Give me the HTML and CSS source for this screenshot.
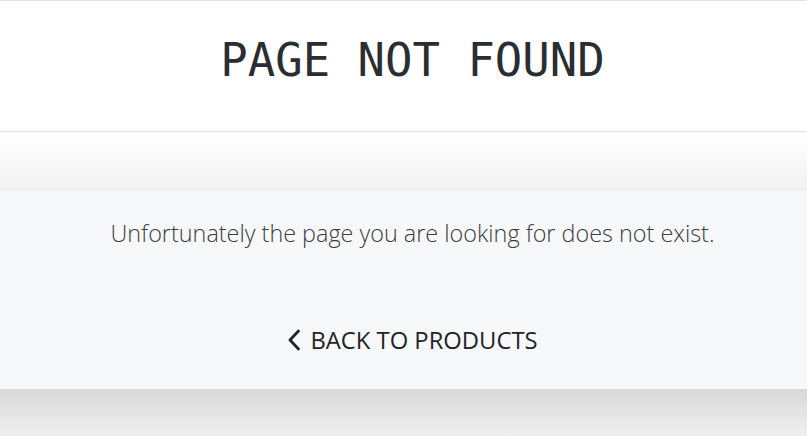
FILE: index.html
```html
<!DOCTYPE html>
<html lang="en">
<head>
<meta charset="utf-8">
<title>Page not found</title>
<link rel="stylesheet" href="styles.css">
</head>
<body>
  <header class="header">
    <h1 class="title">PAGE NOT FOUND</h1>
  </header>
  <div class="spacer"></div>
  <main class="panel">
    <p class="message">Unfortunately the page you are looking for does not exist.</p>
    <a class="back" href="#">
      <svg class="chev" width="14" height="22" viewBox="0 0 14 22"><path d="M11.5 2 L3 11 L11.5 20" fill="none" stroke="#212529" stroke-width="2.8" stroke-linecap="round" stroke-linejoin="round"/></svg>
      <span>BACK TO PRODUCTS</span>
    </a>
  </main>
  <div class="footer-shade"></div>
</body>
</html>
```

FILE: styles.css
```css
html, body { margin: 0; padding: 0; }
body {
  background: #f0f0f0;
  color: #212529;
  font-family: "Open Sans", "Liberation Sans", sans-serif;
}
.header {
  background: #fff;
  border-top: 1px solid #e1e4e8;
  border-bottom: 1px solid #e0e0e2;
  height: 132px;
  box-sizing: border-box;
  padding: 33px 0 0 18px;
  display: flex;
  justify-content: center;
}
.title {
  margin: 0;
  font-family: "DejaVu Sans Mono", monospace;
  font-weight: normal;
  font-size: 45.6px;
  line-height: 1.2;
  color: #2a2d31;
}
.spacer {
  height: 59px;
  background: linear-gradient(#ffffff, #f1f1f1);
}
.panel {
  background: #f7f8fa;
  height: 198px;
  display: flex;
  flex-direction: column;
  align-items: center;
  box-sizing: border-box;
  padding: 26px 0 0 18px;
}
.message {
  margin: 0;
  font-weight: 300;
  font-size: 23.4px;
  color: #3a3d40;
}
.back {
  margin-top: 75px;
  display: flex;
  align-items: center;
  gap: 9px;
  text-decoration: none;
  color: #212529;
  font-size: 23.8px;
}
.footer-shade {
  height: 48px;
  background: linear-gradient(#d9d9d9, #f0f0f0);
}
```
